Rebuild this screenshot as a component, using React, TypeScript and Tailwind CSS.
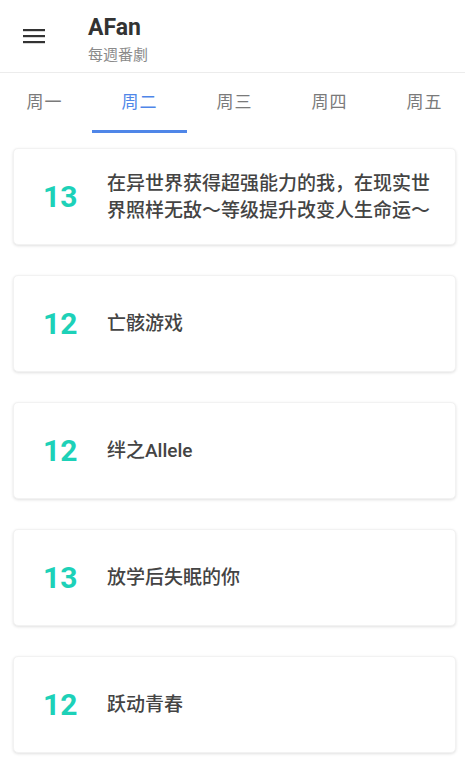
import React from 'react';

const FONT = '"Roboto", "Noto Sans CJK SC", "Noto Sans CJK TC", sans-serif';

const TABS = ['周一', '周二', '周三', '周四', '周五'];

const SHOWS: { ep: number; title: string }[] = [
  { ep: 13, title: '在异世界获得超强能力的我，在现实世界照样无敌～等级提升改变人生命运～' },
  { ep: 12, title: '亡骸游戏' },
  { ep: 12, title: '绊之Allele' },
  { ep: 13, title: '放学后失眠的你' },
  { ep: 12, title: '跃动青春' },
];

const MenuIcon = () => (
  <svg width="22" height="16" viewBox="0 0 22 16" fill="none">
    <rect x="0" y="1" width="22" height="2.2" fill="#333" />
    <rect x="0" y="7" width="22" height="2.2" fill="#333" />
    <rect x="0" y="13" width="22" height="2.2" fill="#333" />
  </svg>
);

export default function App() {
  const active = 1;

  return (
    <div className="w-[465px] h-[770px] overflow-hidden bg-white" style={{ fontFamily: FONT }}>
      {/* Header */}
      <div className="h-[73px] flex items-center border-b border-[#ececec]">
        <div className="w-[88px] pl-[23px]">
          <MenuIcon />
        </div>
        <div className="flex flex-col pt-[7px]">
          <span className="text-[23px] leading-[27px] font-bold text-[#333]">AFan</span>
          <span className="text-[15px] leading-[20px] mt-[4px] text-[#8a8a8a]">每週番劇</span>
        </div>
      </div>

      {/* Tabs */}
      <div className="h-[60px] flex overflow-hidden -ml-[3px]">
        {TABS.map((t, i) => (
          <div
            key={t}
            className={`shrink-0 w-[95px] flex items-center justify-center relative text-[17px] tracking-[1px] ${
              i === active ? 'text-[#4f86e8]' : 'text-[#7a7a7a]'
            }`}
          >
            {t}
            {i === active && (
              <div className="absolute left-0 right-0 bottom-0 h-[3px] bg-[#4f86e8]" />
            )}
          </div>
        ))}
      </div>

      {/* List */}
      <div className="flex flex-col gap-[30px] pt-[15px] pl-[13px] pr-[9px]">
        {SHOWS.map((s, i) => (
          <div
            key={i}
            className="h-[97px] flex items-center rounded-[5px] bg-white border border-[#f2f2f2] shadow-[0_1px_3px_rgba(0,0,0,0.12)]"
          >
            <div className="w-[93px] shrink-0 pl-[29px] text-[30px] font-bold text-[#1dd1b8]">{s.ep}</div>
            <div className="pr-[20px] text-[19px] leading-[27px] font-medium text-[#444]">{s.title}</div>
          </div>
        ))}
      </div>
    </div>
  );
}
